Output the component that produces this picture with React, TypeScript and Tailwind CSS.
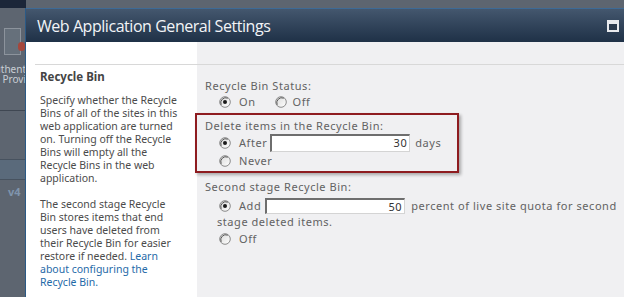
import React from 'react';

const Radio = ({ checked }: { checked?: boolean }) => (
  <svg width="12" height="12" viewBox="0 0 12 12" className="shrink-0">
    <defs>
      <linearGradient id={checked ? 'rg1' : 'rg0'} x1="0" y1="0" x2="1" y2="1">
        <stop offset="0" stopColor="#d8d8d8" />
        <stop offset="1" stopColor="#ffffff" />
      </linearGradient>
    </defs>
    <circle cx="6" cy="6" r="5.3" fill={`url(#${checked ? 'rg1' : 'rg0'})`} stroke="#8a8a8a" strokeWidth="1" />
    <path d="M2.2 8.8 A5 5 0 0 1 8.8 2.2" fill="none" stroke="#5a5a5a" strokeWidth="1" />
    {checked && <circle cx="6" cy="6" r="2" fill="#1a1a1a" />}
  </svg>
);

const Field = ({ value, h }: { value: string; h: string }) => (
  <div
    className={`w-[140px] ${h} bg-white border-t-2 border-l-2 border-r border-b border-t-[#6e6e6e] border-l-[#6e6e6e] border-r-[#d4d4d4] border-b-[#d4d4d4] flex items-center justify-end pr-[2px] text-[#333]`}
  >
    {value}
  </div>
);

export default function App() {
  return (
    <div className="relative w-[624px] h-[297px] overflow-hidden bg-[#5d6570] font-['Noto_Sans',sans-serif]">
      {/* page behind the dialog */}
      <div className="flex flex-col w-[26px] h-full">
        <div className="h-[8px] bg-[#1b2639]" />
        <div className="h-[20px]" />
        <div className="h-[27px] flex pl-[4px]">
          <div className="w-[17px] h-[27px] border border-[#8c939c] bg-[#66707b] relative">
            <div className="absolute right-[-5px] bottom-[3px] w-[7px] h-[9px] bg-[#a5473c] rounded-sm" />
          </div>
        </div>
        <div className="mt-[9px] flex flex-col items-end overflow-hidden text-[10px] leading-[10px] text-[#c9ced4] whitespace-nowrap">
          <span>Authent</span>
          <span>Provi</span>
        </div>
        <div className="mt-[26px] h-px bg-[#3f4752]" />
        <div className="h-[48px]" />
        <div className="h-[21px] bg-[#5a6a7b] border-t border-b border-[#47525f]" />
        <div className="pl-[8px] mt-[4px] text-[11px] font-bold text-[#7f94ac]">v4</div>
      </div>

      {/* dialog window */}
      <div className="absolute left-[25px] top-[8px] right-0 bottom-0 flex flex-col border-l border-[#2b5a86]">
        <div className="h-[34px] shrink-0 flex items-center justify-between bg-gradient-to-b from-[#44576e] to-[#1f3147] border-t border-[#3d6a96] pl-[11px] pr-[5px]">
          <span className="text-[16px] text-[#f2f4f7] font-['Open_Sans',sans-serif] tracking-[-0.45px]">Web Application General Settings</span>
          <div className="w-[12px] h-[12px] border-2 border-[#e8eaee] flex flex-col">
            <div className="h-[2px] bg-[#e8eaee]" />
            <div className="flex-1 bg-[#2b3a4d]" />
          </div>
        </div>

        <div className="flex-1 flex">
          {/* description column */}
          <div className="w-[171px] bg-white pt-[22px]">
            <div className="ml-[9px] border-t border-[#d8d8d8] pl-[5px] pr-[17px] text-[10.5px] leading-[13px] text-[#4b4b4b]">
              <div className="mt-[5px] text-[11.5px] font-bold text-[#444]">Recycle Bin</div>
              <p className="mt-[11px]">
                Specify whether the Recycle Bins of all of the sites in this web application are turned on. Turning off the Recycle Bins will empty all the Recycle Bins in the web application.
              </p>
              <p className="mt-[13px]">
                The second stage Recycle Bin stores items that end users have deleted from their Recycle Bin for easier restore if needed. <a className="text-[#1f6aa8]">Learn about configuring the Recycle Bin.</a>
              </p>
            </div>
          </div>

          {/* settings column */}
          <div className="flex-1 bg-[#f0f0f2] pt-[22px]">
            <div className="border-t border-[#d8d8d8] pl-[8px] text-[11px] leading-[14px] tracking-[0.55px] text-[#626262]">
              <div className="mt-[14px] h-[14px]">Recycle Bin Status:</div>
              <div className="h-[18px] flex items-center pl-[14px]">
                <Radio checked />
                <span className="ml-[8px]">On</span>
                <span className="ml-[19px]"><Radio /></span>
                <span className="ml-[6px]">Off</span>
              </div>

              <div className="mt-[2px] -ml-[10px] w-[264px] h-[60px] border-2 border-[#8e1c20] shadow-[2px_2px_3px_rgba(0,0,0,0.3)] pl-[8px]">
                <div className="mt-[4px] h-[14px]">Delete items in the Recycle Bin:</div>
                <div className="h-[19px] flex items-center pl-[14px]">
                  <Radio checked />
                  <span className="ml-[8px]">After</span>
                  <span className="ml-[3px]"><Field value="30" h="h-[18px]" /></span>
                  <span className="ml-[5px]">days</span>
                </div>
                <div className="h-[17px] flex items-center pl-[14px]">
                  <Radio />
                  <span className="ml-[8px]">Never</span>
                </div>
              </div>

              <div className="mt-[7px] h-[14px]">Second stage Recycle Bin:</div>
              <div className="h-[18px] mt-[3px] flex items-center pl-[14px]">
                <Radio checked />
                <span className="ml-[8px]">Add</span>
                <span className="ml-[4px]"><Field value="50" h="h-[16px]" /></span>
                <span className="ml-[6px] whitespace-nowrap">percent of live site quota for second</span>
              </div>
              <div className="h-[14px] pl-[12px]">stage deleted items.</div>
              <div className="h-[16px] mt-[2px] flex items-center pl-[14px]">
                <Radio />
                <span className="ml-[8px]">Off</span>
              </div>
            </div>
          </div>
        </div>
      </div>
    </div>
  );
}
